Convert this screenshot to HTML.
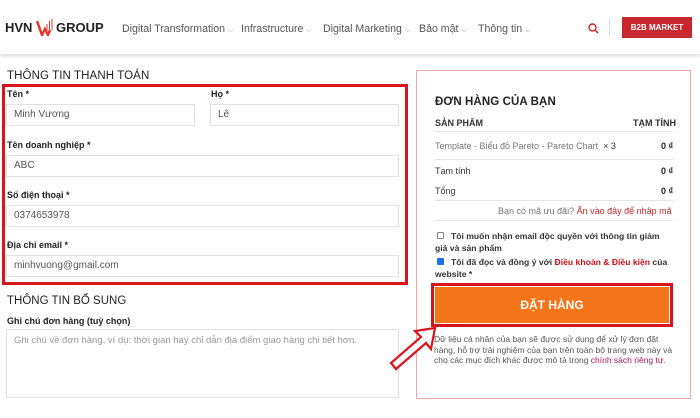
<!DOCTYPE html>
<html><head><meta charset="utf-8"><style>
*{box-sizing:border-box;margin:0;padding:0}
body{width:700px;height:418px;overflow:hidden;background:#fff;font-family:"Liberation Sans","Noto Sans CJK SC",sans-serif;position:relative;color:#222}
.a{position:absolute;white-space:nowrap}
.hdr{position:absolute;left:0;top:0;width:700px;height:54px;background:#fff;box-shadow:0 2px 4px rgba(0,0,0,.15)}
.nav{font-size:10.6px;color:#555;top:23px}
.nav small{font-size:7px;color:#999;margin-left:3px}
.lbl{font-size:9px;font-weight:bold;color:#222}
.inp{position:absolute;border:1px solid #e1e1e1;background:#fff;font-size:10px;color:#555;padding-left:7px;line-height:20px;height:22px}
.h{font-size:11.5px;color:#222;font-weight:bold;letter-spacing:.1px}
.r{font-size:9px}
</style></head><body>
<div class="hdr"></div>
<div class="a" style="left:5px;top:20px;font-size:13px;font-weight:bold;color:#222">HVN</div>
<svg class="a" style="left:36px;top:18px" width="17" height="18" viewBox="0 0 17 18"><path d="M1 3 L6 17 L9 11 L12 17 L14 12" fill="none" stroke="#e03a2f" stroke-width="2.5"/><path d="M11 6v7M13.5 3v9M16 1v11" stroke="#e03a2f" stroke-width="1"/></svg>
<div class="a" style="left:56px;top:20px;font-size:13px;font-weight:bold;color:#222">GROUP</div>
<div class="a nav" style="left:122px">Digital Transformation<small>⌵</small></div>
<div class="a nav" style="left:241px">Infrastructure<small>⌵</small></div>
<div class="a nav" style="left:323px">Digital Marketing<small>⌵</small></div>
<div class="a nav" style="left:419px">Bảo mật<small>⌵</small></div>
<div class="a nav" style="left:478px">Thông tin<small>⌵</small></div>
<svg class="a" style="left:588px;top:23px" width="11" height="11"><circle cx="4.5" cy="4.5" r="3.5" fill="none" stroke="#c8282d" stroke-width="1.4"/><path d="M7 7l3 3" stroke="#c8282d" stroke-width="1.5"/></svg>
<div class="a" style="left:609px;top:19px;width:1px;height:18px;background:#ddd"></div>
<div class="a" style="left:622px;top:17px;width:70px;height:21px;background:#c8282d;color:#fff;font-size:8px;font-weight:bold;text-align:center;line-height:21px">B2B MARKET</div>

<div class="a h" style="left:7px;top:70px;font-weight:normal;color:#222;font-size:11.5px">THÔNG TIN THANH TOÁN</div>
<div class="a" style="left:2px;top:84px;width:406px;height:201px;border:3px solid #d8141c"></div>
<div class="a lbl" style="left:7px;top:89px">Tên *</div>
<div class="a lbl" style="left:211px;top:89px">Họ *</div>
<div class="inp" style="left:6px;top:104px;width:189px">Minh Vương</div>
<div class="inp" style="left:210px;top:104px;width:189px">Lê</div>
<div class="a lbl" style="left:7px;top:140px">Tên doanh nghiệp *</div>
<div class="inp" style="left:6px;top:155px;width:393px">ABC</div>
<div class="a lbl" style="left:7px;top:190px">Số điện thoại *</div>
<div class="inp" style="left:6px;top:205px;width:393px">0374653978</div>
<div class="a lbl" style="left:7px;top:240px">Địa chỉ email *</div>
<div class="inp" style="left:6px;top:255px;width:393px">minhvuong@gmail.com</div>

<div class="a" style="left:7px;top:295px;font-size:11.5px;color:#222">THÔNG TIN BỔ SUNG</div>
<div class="a lbl" style="left:7px;top:316px">Ghi chú đơn hàng (tuỳ chọn)</div>
<div class="inp" style="left:6px;top:329px;width:393px;height:69px;color:#999;line-height:14px;padding-top:4px;font-size:9.5px">Ghi chú về đơn hàng, ví dụ: thời gian hay chỉ dẫn địa điểm giao hàng chi tiết hơn.</div>

<div class="a" style="left:416px;top:70px;width:275px;height:329px;border:1px solid #f0a7aa"></div>
<div class="a h" style="left:435px;top:96px">ĐƠN HÀNG CỦA BẠN</div>
<div class="a" style="left:435px;top:118px;font-size:9px;font-weight:bold;color:#333">SẢN PHẨM</div>
<div class="a" style="left:633px;top:118px;font-size:9px;font-weight:bold;color:#333">TẠM TÍNH</div>
<div class="a" style="left:435px;top:131px;width:238px;height:1px;background:#e5e5e5"></div>
<div class="a r" style="left:435px;top:141px;color:#777">Template - Biểu đồ Pareto - Pareto Chart &nbsp;<span style="color:#333">× 3</span></div>
<div class="a r" style="left:661px;top:141px;font-weight:bold">0 ₫</div>
<div class="a" style="left:435px;top:159px;width:238px;height:1px;background:#e5e5e5"></div>
<div class="a r" style="left:435px;top:166px;color:#333">Tạm tính</div>
<div class="a r" style="left:661px;top:166px;font-weight:bold">0 ₫</div>
<div class="a r" style="left:435px;top:186px;color:#333">Tổng</div>
<div class="a r" style="left:661px;top:186px;font-weight:bold">0 ₫</div>
<div class="a" style="left:435px;top:200px;width:238px;height:1px;background:#e5e5e5"></div>
<div class="a r" style="left:498px;top:206px;color:#777">Bạn có mã ưu đãi? <span style="color:#c8282d">Ấn vào đây để nhập mã</span></div>
<div class="a" style="left:435px;top:220px;width:238px;height:1px;background:#e5e5e5"></div>
<div class="a" style="left:437px;top:232px;width:7px;height:7px;border:1px solid #888;border-radius:1px"></div>
<div class="a" style="left:435px;top:230px;line-height:12px;font-size:8.6px;font-weight:bold;color:#333;white-space:normal;width:238px"><span style="padding-left:16px"></span>Tôi muốn nhận email độc quyền với thông tin giảm giá và sản phẩm</div>
<div class="a" style="left:437px;top:258px;width:7px;height:7px;background:#1a73e8;border-radius:1px"></div>
<div class="a" style="left:435px;top:256px;line-height:12px;font-size:8.6px;font-weight:bold;color:#333;white-space:normal;width:238px"><span style="padding-left:16px"></span>Tôi đã đọc và đồng ý với <span style="color:#c8141c">Điều khoản &amp; Điều kiện</span> của website *</div>

<div class="a" style="left:431px;top:283px;width:242px;height:44px;border:3px solid #d8141c;background:#fff;padding:1px"><div style="width:100%;height:100%;background:#f5761a;color:#fff;font-size:12px;font-weight:bold;text-align:center;line-height:36px">ĐẶT HÀNG</div></div>
<div class="a" style="left:434px;top:334px;color:#555;line-height:10.5px;font-size:8.5px;white-space:normal;width:240px">Dữ liệu cá nhân của bạn sẽ được sử dụng để xử lý đơn đặt hàng, hỗ trợ trải nghiệm của bạn trên toàn bộ trang web này và cho các mục đích khác được mô tả trong <span style="color:#a0205a">chính sách riêng tư</span>.</div>

<svg class="a" style="left:385px;top:325px" width="55" height="50" viewBox="0 0 55 50"><path d="M50 3 L30 6 L36 12 L6 38 L11 44 L41 18 L46 24 Z" fill="#fff" stroke="#d8141c" stroke-width="2.2" stroke-linejoin="miter"/></svg>
</body></html>
